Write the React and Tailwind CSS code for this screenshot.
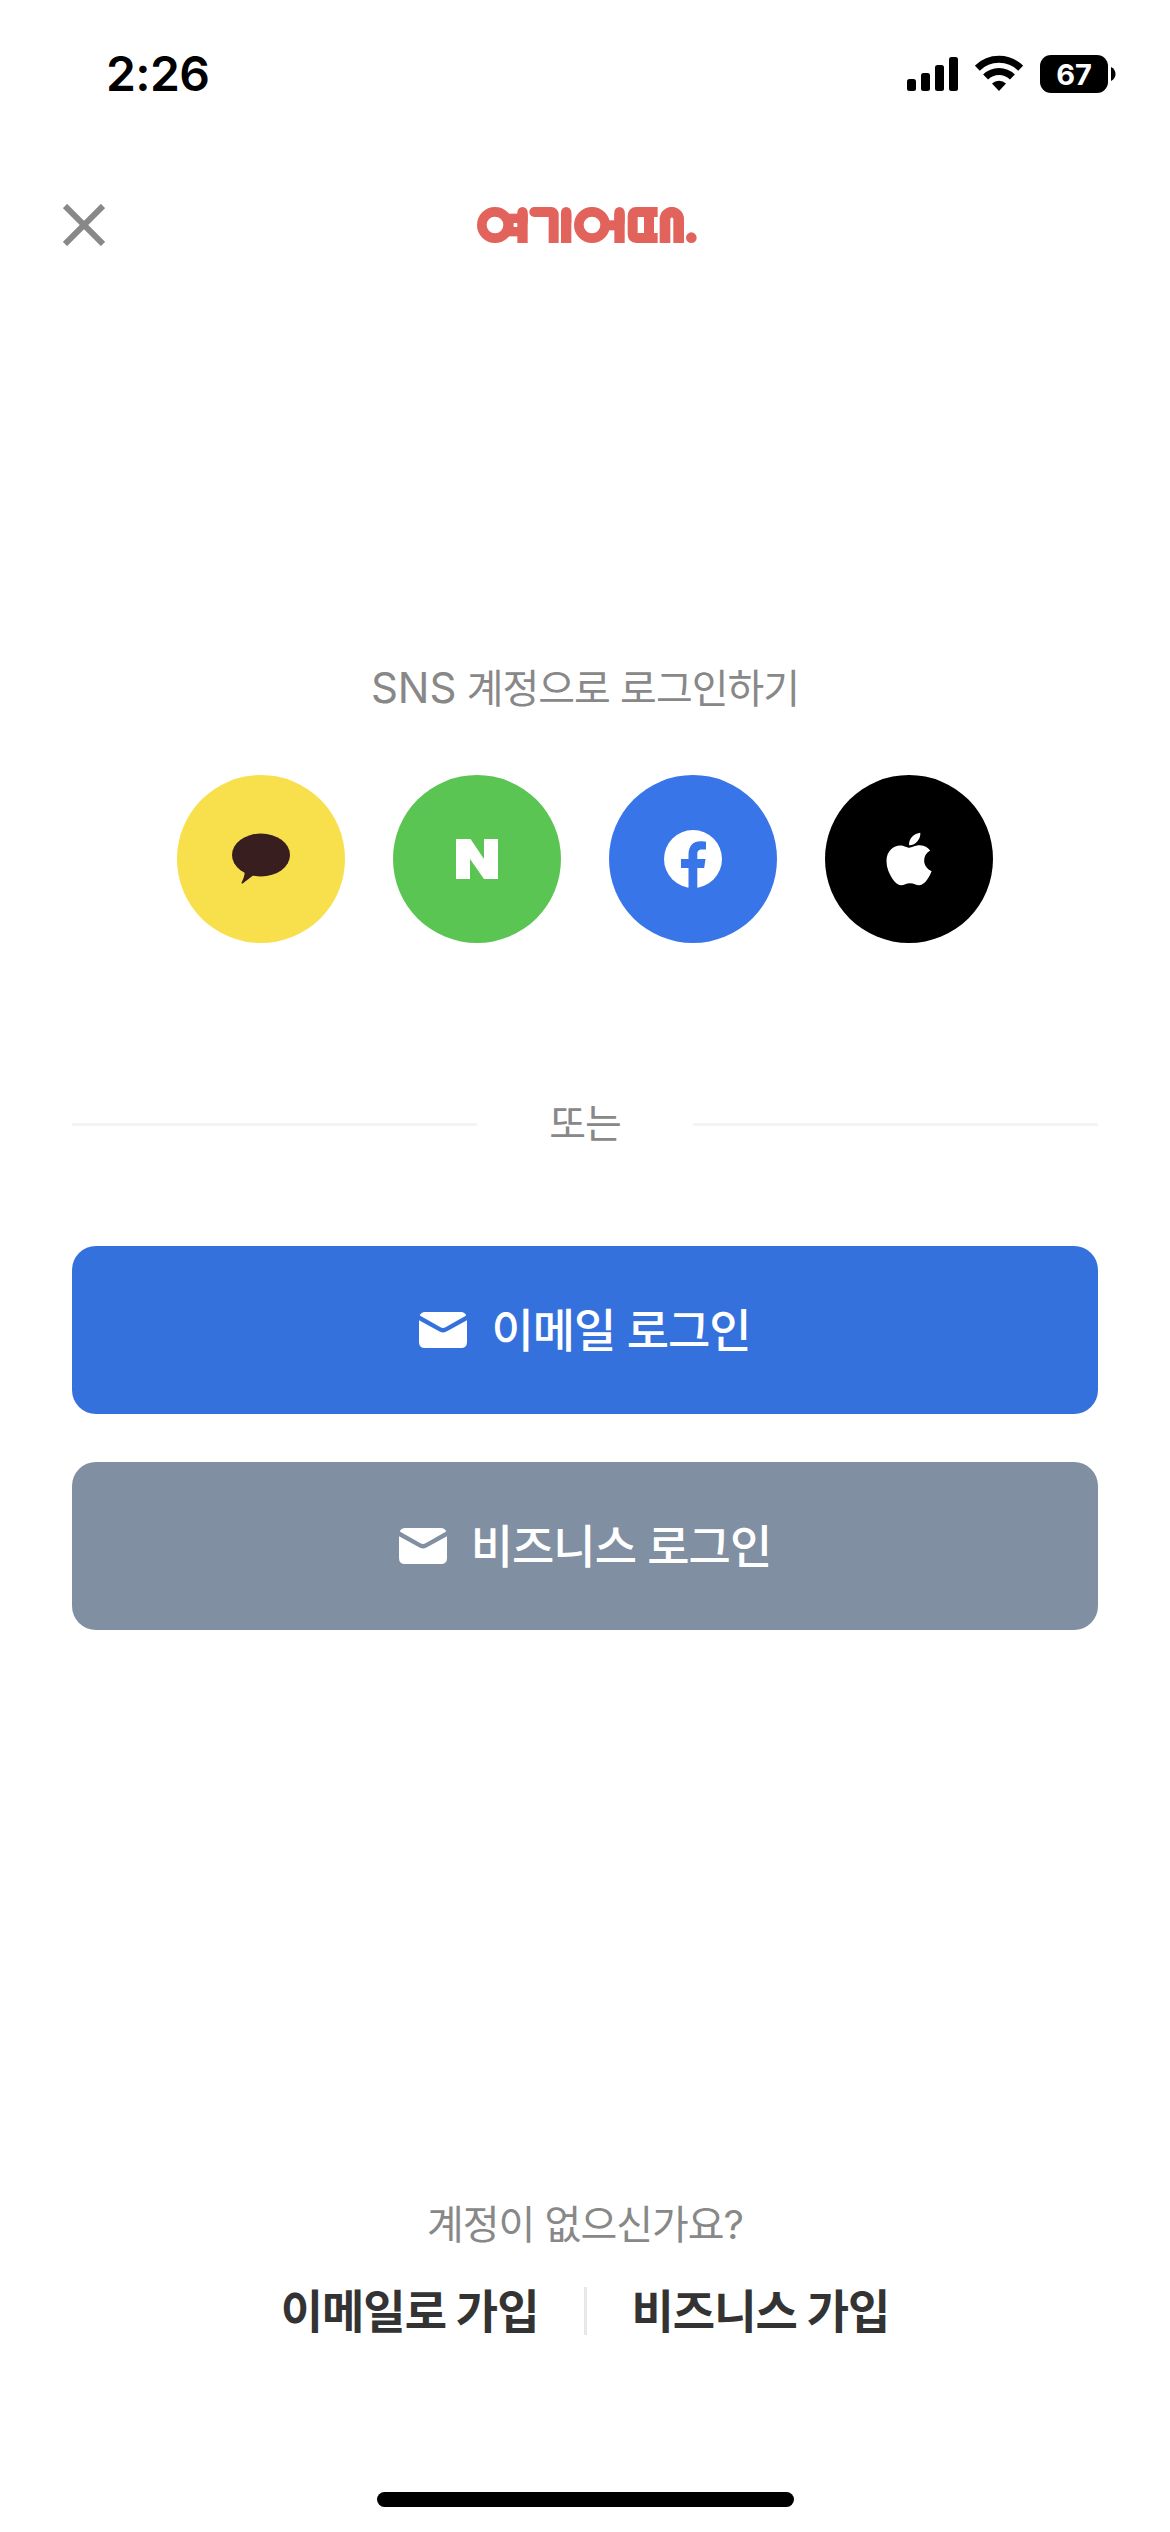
import { FaApple } from 'react-icons/fa';

const StatusBar = () => (
  <div className="flex h-[150px] items-start justify-between pt-[49px] pr-[54px] pl-[106px]">
    <span className="text-[48px] leading-[50px] font-semibold tracking-[-0.6px] text-black">2:26</span>
    <div className="flex pt-[6px]">
      <svg width="52" height="38" viewBox="0 0 52 38" fill="#000">
        <rect x="0" y="24" width="9" height="12" rx="2.5" />
        <rect x="14" y="18" width="9" height="18" rx="2.5" />
        <rect x="28" y="10" width="9" height="26" rx="2.5" />
        <rect x="42" y="2" width="9" height="34" rx="2.5" />
      </svg>
      <svg className="ml-4" width="48" height="38" viewBox="0 0 48 38" fill="none" stroke="#000" strokeWidth="7">
        <path d="M2.3 13.2A31 31 0 0 1 45.7 13.2" />
        <path d="M10.6 22A19 19 0 0 1 37.4 22" />
        <path d="M24 36L17 28.6A10 10 0 0 1 31 28.6Z" fill="#000" stroke="none" />
      </svg>
      <div className="ml-[17px] flex h-[38px] w-[68px] items-center justify-center rounded-[11px] bg-black text-[29px] leading-none font-bold text-white">
        67
      </div>
      <svg className="mt-3 ml-[3px]" width="5" height="14" viewBox="0 0 5 14">
        <path d="M0 0C6 3 6 11 0 14Z" fill="#000" />
      </svg>
    </div>
  </div>
);

const BrandLogo = () => (
  <svg width="220" height="36" viewBox="0 0 660 108" fill="#e1635c" role="img" aria-label="여기어때">
    <circle cx="54" cy="54" r="39.5" fill="none" stroke="#e1635c" strokeWidth="29" />
    <rect x="92" y="20" width="36" height="28" />
    <rect x="88" y="60" width="40" height="28" />
    <rect x="98" y="44" width="12" height="20" />
    <rect x="121" y="0" width="31" height="60" rx="15.5" />
    <rect x="121" y="20" width="31" height="88" />
    <path d="M172 15H222Q230 15 230 23V108" fill="none" stroke="#e1635c" strokeWidth="30" />
    <circle cx="172" cy="15" r="15" />
    <rect x="252" y="0" width="31" height="60" rx="15.5" />
    <rect x="252" y="20" width="31" height="88" />
    <circle cx="345" cy="54" r="39.5" fill="none" stroke="#e1635c" strokeWidth="29" />
    <rect x="392" y="40" width="30" height="30" />
    <rect x="412" y="0" width="31" height="60" rx="15.5" />
    <rect x="412" y="20" width="31" height="88" />
    <path d="M542 15H478Q467 15 467 26V82Q467 93 478 93H542M516 15V93" fill="none" stroke="#e1635c" strokeWidth="30" />
    <path d="M564 108V36A20.5 20.5 0 0 1 605 36V108" fill="none" stroke="#e1635c" strokeWidth="32" />
    <circle cx="643" cy="92" r="16" />
  </svg>
);

const KakaoIcon = () => (
  <svg width="58" height="52" viewBox="0 0 58 52" fill="#381e1f">
    <ellipse cx="29" cy="22" rx="29" ry="21.5" />
    <path d="M13 38C12.500 43 11 47 9.600 49.500C9.400 50.800 10 51 11 50.200L23 41Z" />
  </svg>
);

const NaverIcon = () => (
  <svg width="42" height="40" viewBox="0 0 42 40" fill="#fff">
    <path d="M0 0H14.500L28 20V0H42V40H28L14 20V40H0Z" />
  </svg>
);

const FacebookIcon = () => (
  <svg width="58" height="58" viewBox="0 0 58 58">
    <circle cx="29" cy="29" r="29" fill="#fff" />
    <path
      d="M24.500 59V38H17V29H24.500V25C24.500 15.500 29.500 11.300 36.500 11.300C39 11.300 41 11.600 42 11.800V19.500H38C34.500 19.500 33.300 21.500 33.300 24V29H41.500L40.200 38H33.300V59Z"
      fill="#3875e9"
    />
  </svg>
);

const MailIcon = () => (
  <svg width="48" height="36" viewBox="0 0 48 36" fill="#fff">
    <path d="M0.800 3.500Q2 0 6 0H42Q46 0 47.200 3.500L26.500 15.200Q24 16.600 21.500 15.200Z" />
    <path d="M0 8.200L21 19.700Q24 21.300 27 19.700L48 8.200V30Q48 36 42 36H6Q0 36 0 30Z" />
  </svg>
);

const snsAccounts = [
  { name: 'kakao', bg: 'bg-[#f8df4c]', icon: <KakaoIcon /> },
  { name: 'naver', bg: 'bg-[#5bc553]', icon: <NaverIcon /> },
  { name: 'facebook', bg: 'bg-[#3875e9]', icon: <FacebookIcon /> },
  { name: 'apple', bg: 'bg-black', icon: <FaApple className="h-[60px] w-[46px] text-white" preserveAspectRatio="none" /> },
];

const App = () => {
  return (
    <div className="flex h-[2532px] w-[1170px] flex-col bg-white font-['Inter','Noto_Sans_CJK_KR',sans-serif]">
      <StatusBar />

      <header className="grid h-[150px] grid-cols-[1fr_220px_1fr] items-center pr-[60px] pl-[63px]">
        <button type="button" aria-label="닫기" className="w-[42px]">
          <svg width="42" height="42" viewBox="0 0 42 42" stroke="#888" strokeWidth="6">
            <path d="M2 2L40 40M40 2L2 40" />
          </svg>
        </button>
        <BrandLogo />
      </header>

      <main className="flex flex-col px-[72px] pt-[358px]">
        <p className="text-center text-[40px] leading-[60px] tracking-[-1px] text-[#888]">
          <span className="text-[42px] tracking-normal">SNS</span> 계정으로 로그인하기
        </p>
        <div className="mt-14 flex justify-center gap-12">
          {snsAccounts.map((sns) => (
            <button
              key={sns.name}
              type="button"
              aria-label={sns.name}
              className={`flex size-[168px] items-center justify-center rounded-full ${sns.bg}`}
            >
              {sns.icon}
            </button>
          ))}
        </div>

        <div className="mt-[151px] flex h-[60px] items-center">
          <div className="h-[3px] flex-1 bg-[#f4f4f4]" />
          <span className="w-[216px] text-center text-[40px] leading-[60px] tracking-[-1px] text-[#888]">또는</span>
          <div className="h-[3px] flex-1 bg-[#f4f4f4]" />
        </div>

        <button
          type="button"
          className="mt-[92px] flex h-[168px] items-center justify-center gap-6 rounded-3xl bg-[#3571dc] text-[46px] font-medium tracking-[-1px] text-white"
        >
          <MailIcon />
          이메일 로그인
        </button>
        <button
          type="button"
          className="mt-12 flex h-[168px] items-center justify-center gap-6 rounded-3xl bg-[#818fa3] text-[46px] font-medium tracking-[-1px] text-white"
        >
          <MailIcon />
          비즈니스 로그인
        </button>
      </main>

      <footer className="mt-auto flex flex-col items-center pb-[25px]">
        <p className="text-[40px] leading-[60px] tracking-[-1px] text-[#888]">계정이 없으신가요?</p>
        <div className="mt-[26px] flex h-[60px] items-center text-[46px] leading-[60px] font-bold tracking-[-1px] text-[#333]">
          <a>이메일로 가입</a>
          <div className="mx-[45px] h-12 w-[3px] bg-[#e8e8e8]" />
          <a>비즈니스 가입</a>
        </div>
        <div className="mt-[151px] h-[15px] w-[417px] rounded-full bg-black" />
      </footer>
    </div>
  );
};

export default App;
